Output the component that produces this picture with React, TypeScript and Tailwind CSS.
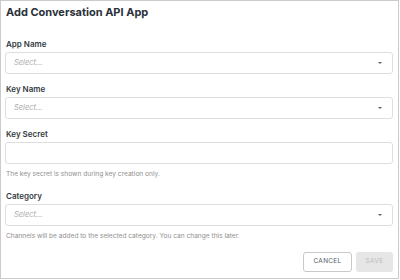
import React from "react";

function Label({ children }: { children: React.ReactNode }) {
  return (
    <div className="pl-[1px] h-[10px] text-[8px] leading-[10px] font-semibold text-[#343b43]">
      {children}
    </div>
  );
}

function SelectBox() {
  return (
    <div className="mt-[3px] h-[22px] flex items-center justify-between rounded-[3px] border border-[#dedede] bg-white pl-[8px] pr-[10px]">
      <span className="text-[7.5px] italic text-[#a9a9a9]">Select...</span>
      <svg width="4" height="2" viewBox="0 0 4 2">
        <path d="M0 0 H4 L2 2 Z" fill="#59606a" />
      </svg>
    </div>
  );
}

function Help({ children }: { children: React.ReactNode }) {
  return (
    <div className="mt-[5px] pl-[1px] h-[10px] text-[6.6px] leading-[10px] text-[#8f8f8f]">
      {children}
    </div>
  );
}

export default function App() {
  return (
    <div
      className="w-[399px] h-[279px] border border-[#cbcbcb] bg-white pl-[4px] pr-[5px]"
      style={{ fontFamily: "Inter, 'Noto Sans', sans-serif" }}
    >
      <h1 className="pl-[1px] pt-[3px] h-[38px] text-[11px] leading-[16px] font-bold text-[#2a3038]">
        Add Conversation API App
      </h1>

      <Label>App Name</Label>
      <SelectBox />

      <div className="mt-[10px]">
        <Label>Key Name</Label>
        <SelectBox />
      </div>

      <div className="mt-[10px]">
        <Label>Key Secret</Label>
        <div className="mt-[3px] h-[22px] rounded-[3px] border border-[#dedede] bg-white" />
        <Help>The key secret is shown during key creation only.</Help>
      </div>

      <div className="mt-[12px]">
        <Label>Category</Label>
        <SelectBox />
        <Help>Channels will be added to the selected category. You can change this later.</Help>
      </div>

      <div className="mt-[11px] flex justify-end gap-[4px]">
        <button className="w-[49px] h-[20px] rounded-[3px] border border-[#c9c9c9] bg-white text-[6.5px] tracking-[0.3px] text-[#555b62]">
          CANCEL
        </button>
        <button className="w-[37px] h-[20px] rounded-[3px] bg-[#e6e6e6] text-[6.5px] tracking-[0.3px] text-[#bcbcbc]">
          SAVE
        </button>
      </div>
    </div>
  );
}
